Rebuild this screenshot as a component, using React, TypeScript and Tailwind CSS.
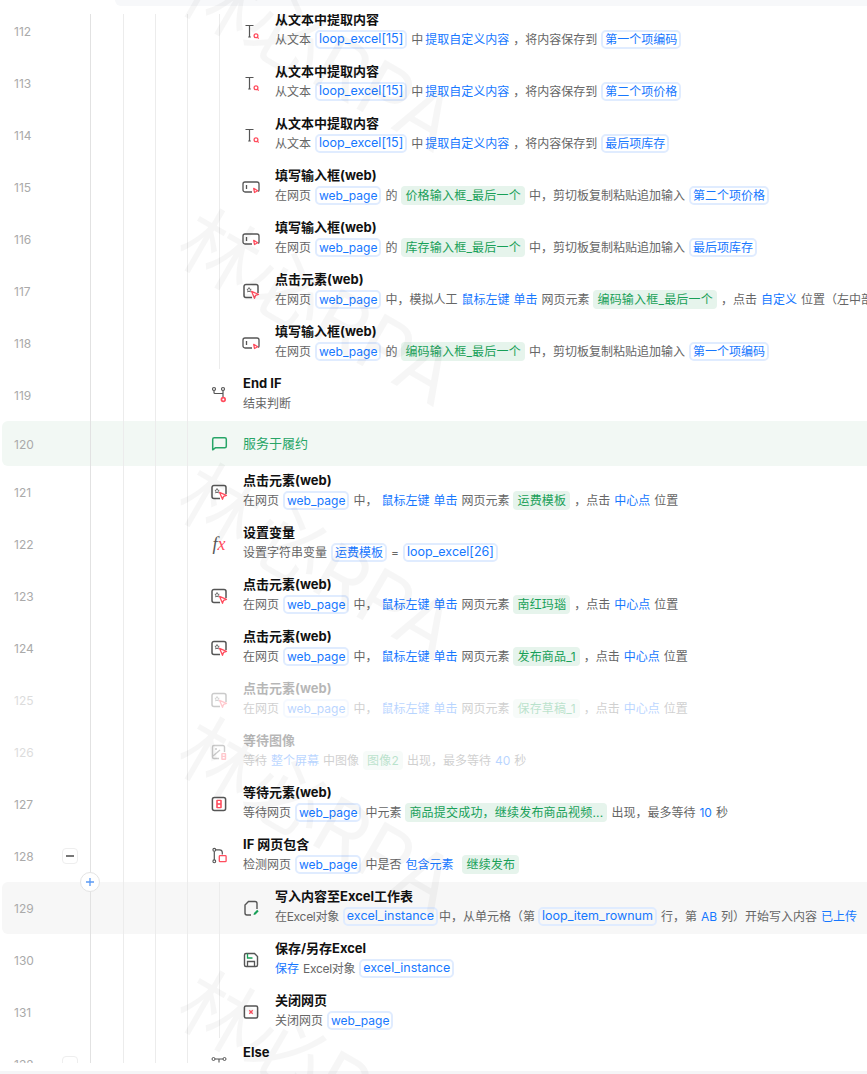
import React from "react";

type Tok = [string, string, string?];

const Pill = ({ children, wide }: { children: React.ReactNode; wide?: boolean }) => (
  <span className={(wide ? "text-[12.5px] " : "") + "inline-flex h-[19px] items-center rounded-[5px] border-2 border-[#e0ecff] px-[2px] text-[#1677ff]"}>{children}</span>
);
const Green = ({ children }: { children: React.ReactNode }) => (
  <span className="inline-flex h-[19px] items-center rounded-[4px] bg-[#e6f4ec] px-[4px] tracking-[0.2px] text-[#18a058]">{children}</span>
);

const Desc = ({ toks }: { toks: Tok[] }) => (
  <div className="mt-[1px] flex h-[19px] items-center gap-1 whitespace-nowrap text-[12px] text-[#666666]">
    {toks.map(([k, t, c], i) => {
      if (k === "p") return <Pill key={i} wide={/^(loop|excel)_/.test(t)}>{t}</Pill>;
      if (k === "g") return <span key={i} className={c}><Green>{t}</Green></span>;
      if (k === "b") return <span key={i} className={"text-[#1677ff] " + (c || "")}>{t}</span>;
      return <span key={i} className={c}>{t}</span>;
    })}
  </div>
);

const D = "#555555";
const R = "#ff4d5e";

const Svg = ({ children }: { children: React.ReactNode }) => (
  <svg width="20" height="20" viewBox="0 0 20 20" fill="none" className="shrink-0">{children}</svg>
);

const IconText = () => (
  <Svg>
    <path d="M4.5 4.5h8M8.5 4.5v11.5M7.2 16h2.6" stroke={D} strokeWidth="1.2" />
    <circle cx="15" cy="14.8" r="1.9" stroke={R} strokeWidth="1.3" />
    <path d="M16.3 16.2l1.4 1.4" stroke={R} strokeWidth="1.2" />
  </Svg>
);
const IconInput = () => (
  <Svg>
    <path d="M11 15H4a2 2 0 0 1-2-2V7a2 2 0 0 1 2-2h12a2 2 0 0 1 2 2v6a2 2 0 0 1-.8 1.6" stroke={D} strokeWidth="1.3" />
    <path d="M5.5 8v4" stroke={D} strokeWidth="1.3" />
    <path d="M12.7 11.3l4 2.4-3.2 1.8z" fill="#ffffff" stroke={R} strokeWidth="1.3" strokeLinejoin="round" />
  </Svg>
);
const IconClick = () => (
  <Svg>
    <path d="M11 16.500H5a2 2 0 0 1-2-2v-9a2 2 0 0 1 2-2h10a2 2 0 0 1 2 2V12" stroke={D} strokeWidth="1.5" />
    <path d="M8 6.500l.6 1.600 1.600.3-1.200 1 .3 1.600-1.300-.8-1.300.8.3-1.600-1.100-1 1.500-.3z" stroke={D} strokeWidth="0.8" />
    <path d="M10.500 10.300l7 3-2.900 1-1.100 3z" fill="#ffffff" stroke={R} strokeWidth="1.300" strokeLinejoin="round" />
  </Svg>
);
const IconEndIf = () => (
  <Svg>
    <circle cx="5" cy="4" r="1.500" stroke={D} strokeWidth="1.200" />
    <circle cx="14" cy="4" r="1.500" stroke={D} strokeWidth="1.200" />
    <path d="M5 5.500V7.500a1 1 0 0 0 1 1h8M14 5.500V12" stroke={D} strokeWidth="1.200" />
    <circle cx="14.300" cy="14.500" r="2.700" fill={R} />
    <circle cx="14.300" cy="14.500" r="1" fill="#ffffff" />
  </Svg>
);
const IconComment = () => (
  <Svg>
    <path d="M3.700 15.800V5.200a1.500 1.500 0 0 1 1.500-1.500h10.600a1.500 1.500 0 0 1 1.500 1.500v7.100a1.500 1.500 0 0 1-1.500 1.500H6.300z" stroke="#27a567" strokeWidth="1.500" strokeLinejoin="round" />
  </Svg>
);
const IconFx = () => (
  <span className="flex w-5 shrink-0 items-center justify-center font-['Liberation_Serif',serif] text-[18px] italic leading-none">
    <span className="text-[#555555]">f</span>
    <span className="text-[#ff4d5e]">x</span>
  </span>
);
const IconImage = () => (
  <Svg>
    <path d="M10 16.500H5a1.500 1.500 0 0 1-1.500-1.500V5A1.500 1.500 0 0 1 5 3.500h9A1.500 1.500 0 0 1 15.500 5v5" stroke={D} strokeWidth="1.400" />
    <circle cx="7" cy="7" r="1" fill={D} />
    <path d="M4 14l7-6" stroke={D} strokeWidth="1.300" />
    <rect x="12.200" y="11" width="5" height="7" rx="1" fill={R} />
    <rect x="13.700" y="12.300" width="2" height="1.500" fill="#ffffff" />
    <rect x="13.700" y="15" width="2" height="1.500" fill="#ffffff" />
  </Svg>
);
const IconWait = () => (
  <Svg>
    <rect x="3.400" y="3.400" width="13.200" height="13.200" rx="2" stroke={D} strokeWidth="1.500" />
    <rect x="7.200" y="5.700" width="5.600" height="8.600" rx="1" fill={R} />
    <rect x="8.800" y="7" width="2.400" height="2.200" fill="#ffffff" />
    <rect x="8.800" y="10.800" width="2.400" height="2.200" fill="#ffffff" />
  </Svg>
);
const IconIf = () => (
  <Svg>
    <circle cx="5.300" cy="3.800" r="1.400" stroke={D} strokeWidth="1.100" />
    <circle cx="5.300" cy="15.300" r="1.400" stroke={D} strokeWidth="1.100" />
    <path d="M5.300 5.200v8.700M6.800 3.800h3.700a2.800 2.800 0 0 1 2.800 2.800v2" stroke={D} strokeWidth="1.200" />
    <rect x="10.300" y="9.700" width="6.800" height="6" rx="0.800" stroke={R} strokeWidth="1.300" />
  </Svg>
);
const IconExcel = () => (
  <Svg>
    <path d="M10 17H6a2 2 0 0 1-2-2V7l3.500-3.500H14a2 2 0 0 1 2 2V11" stroke={D} strokeWidth="1.400" />
    <path d="M12.500 17l.5-2 3.200-3.200 1.500 1.500L14.500 16.500z" fill="#18a058" />
  </Svg>
);
const IconSave = () => (
  <Svg>
    <path d="M3.500 5a1.500 1.500 0 0 1 1.500-1.500h8.500l3 3V15a1.500 1.500 0 0 1-1.500 1.500H5A1.500 1.500 0 0 1 3.500 15z" stroke={D} strokeWidth="1.400" />
    <path d="M6.500 16v-4.500h7V16" stroke={D} strokeWidth="1.300" />
    <path d="M6.500 3.800V8h5" stroke="#18a058" strokeWidth="1.300" />
  </Svg>
);
const IconClose = () => (
  <Svg>
    <rect x="3.400" y="3.900" width="13.200" height="12.200" rx="1.500" stroke={D} strokeWidth="1.500" />
    <path d="M8.300 8.300l3.400 3.400M11.700 8.300l-3.400 3.400" stroke={R} strokeWidth="1.300" />
  </Svg>
);
const IconElse = () => (
  <Svg>
    <circle cx="4.500" cy="5" r="1.500" stroke={D} />
    <circle cx="15.500" cy="5" r="1.500" stroke={D} />
    <path d="M6 5h8M10 5v3.500" stroke={D} strokeWidth="1.100" />
  </Svg>
);

type RowData = {
  n: number;
  depth: 4 | 5;
  icon: React.ReactNode;
  title: string;
  toks: Tok[];
  faded?: boolean;
  hover?: boolean;
  fold?: boolean;
  plus?: boolean;
};

const extract = (n: number, v: string): RowData => ({
  n, depth: 5, icon: <IconText />, title: "从文本中提取内容",
  toks: [["t", "从文本"], ["p", "loop_excel[15]"], ["t", "中"], ["b", "提取自定义内容", "-ml-[2px]"], ["t", "，将内容保存到"], ["p", v]],
});
const fill = (n: number, e: string, v: string): RowData => ({
  n, depth: 5, icon: <IconInput />, title: "填写输入框(web)",
  toks: [["t", "在网页"], ["p", "web_page"], ["t", "的"], ["g", e], ["t", "中，剪切板复制粘贴追加输入"], ["p", v]],
});
const click = (n: number, e: string, faded = false): RowData => ({
  n, depth: 4, icon: <IconClick />, title: "点击元素(web)", faded,
  toks: [["t", "在网页"], ["p", "web_page"], ["t", "中，"], ["b", "鼠标左键"], ["b", "单击"], ["t", "网页元素"], ["g", e], ["t", "，点击"], ["b", "中心点"], ["t", "位置"]],
});

const before: RowData[] = [
  extract(112, "第一个项编码"),
  extract(113, "第二个项价格"),
  extract(114, "最后项库存"),
  fill(115, "价格输入框_最后一个", "第二个项价格"),
  fill(116, "库存输入框_最后一个", "最后项库存"),
  {
    n: 117, depth: 5, icon: <IconClick />, title: "点击元素(web)",
    toks: [["t", "在网页"], ["p", "web_page"], ["t", "中，模拟人工"], ["b", "鼠标左键"], ["b", "单击"], ["t", "网页元素"], ["g", "编码输入框_最后一个"], ["t", "，点击"], ["b", "自定义"], ["t", "位置（左中部"]],
  },
  fill(118, "编码输入框_最后一个", "第一个项编码"),
  { n: 119, depth: 4, icon: <IconEndIf />, title: "End IF", toks: [["t", "结束判断"]] },
];

const after: RowData[] = [
  click(121, "运费模板"),
  {
    n: 122, depth: 4, icon: <IconFx />, title: "设置变量",
    toks: [["t", "设置字符串变量"], ["p", "运费模板"], ["t", "="], ["p", "loop_excel[26]"]],
  },
  click(123, "南红玛瑙"),
  click(124, "发布商品_1"),
  click(125, "保存草稿_1", true),
  {
    n: 126, depth: 4, icon: <IconImage />, title: "等待图像", faded: true,
    toks: [["t", "等待"], ["b", "整个屏幕"], ["t", "中图像"], ["g", "图像2"], ["t", "出现，最多等待"], ["b", "40"], ["t", "秒"]],
  },
  {
    n: 127, depth: 4, icon: <IconWait />, title: "等待元素(web)",
    toks: [["t", "等待网页"], ["p", "web_page"], ["t", "中元素"], ["g", "商品提交成功，继续发布商品视频..."], ["t", "出现，最多等待"], ["b", "10"], ["t", "秒"]],
  },
  {
    n: 128, depth: 4, icon: <IconIf />, title: "IF 网页包含", fold: true, plus: true,
    toks: [["t", "检测网页"], ["p", "web_page"], ["t", "中是否"], ["b", "包含元素"], ["g", "继续发布", "ml-[5px]"]],
  },
  {
    n: 129, depth: 5, icon: <IconExcel />, title: "写入内容至Excel工作表", hover: true,
    toks: [["t", "在Excel对象", "tracking-[-0.3px]"], ["p", "excel_instance"], ["t", "中，从单元格（第", "-ml-[3px] -mr-[1px]"], ["p", "loop_item_rownum"], ["t", "行，第"], ["b", "AB"], ["t", "列）开始写入内容"], ["b", "已上传"]],
  },
  {
    n: 130, depth: 5, icon: <IconSave />, title: "保存/另存Excel",
    toks: [["b", "保存"], ["t", "Excel对象", "tracking-[-0.3px]"], ["p", "excel_instance"]],
  },
  {
    n: 131, depth: 5, icon: <IconClose />, title: "关闭网页",
    toks: [["t", "关闭网页"], ["p", "web_page"]],
  },
  { n: 132, depth: 4, icon: <IconElse />, title: "Else", fold: true, toks: [] },
];

const Guides = ({ depth }: { depth: 4 | 5 }) => (
  <>
    <div className="h-full w-[33px] shrink-0 border-l border-[#e2e2e2]" />
    <div className="h-full w-[32px] shrink-0 border-l border-[#ececec]" />
    <div className="h-full w-[32px] shrink-0 border-l border-[#ececec]" />
    {depth === 5 && <div className="h-full w-[32px] shrink-0 border-l border-[#ececec]" />}
    <div className="h-full w-[22px] shrink-0 border-l border-[#ececec]" />
  </>
);

const Num = ({ n, fold, faded }: { n: number; fold?: boolean; faded?: boolean }) => (
  <div className="flex h-full w-[88px] shrink-0 items-center pl-3">
    <span className={faded ? "mt-[2px] w-[48px] text-[12px] text-[#aaaaaa] opacity-40" : "mt-[2px] w-[48px] text-[12px] text-[#aaaaaa]"}>{n}</span>
    {fold && (
      <span className="flex h-4 w-4 items-center justify-center rounded-[4px] border border-[#eeeeee] bg-white">
        <span className="h-[1.5px] w-2 bg-[#777777]" />
      </span>
    )}
  </div>
);

const Row = ({ r }: { r: RowData }) => (
  <div className={(r.hover ? "bg-[#f7f7f7] " : "") + "relative ml-[2px] flex h-[52px] items-center rounded-l-md"}>
    <Num n={r.n} fold={r.fold} faded={r.faded} />
    <Guides depth={r.depth} />
    <div className={(r.faded ? "opacity-30 " : "") + "flex h-full items-center gap-[14px]"}>
      {r.icon}
      <div className="flex h-full flex-col pt-1">
        <div className="h-[20px] whitespace-nowrap text-[13px] font-bold leading-[20px] text-[#111111]">{r.title}</div>
        <Desc toks={r.toks} />
      </div>
    </div>
    {r.plus && (
      <span className="absolute -bottom-[10px] left-[78px] z-10 flex h-[20px] w-[20px] items-center justify-center rounded-full border border-[#e4e4e4] bg-white">
        <svg width="10" height="10" viewBox="0 0 10 10"><path d="M5 1v8M1 5h8" stroke="#5b9bf5" strokeWidth="1.3" /></svg>
      </span>
    )}
  </div>
);

const Section = () => (
  <div className="relative ml-[2px] flex h-[45px] items-center rounded-l-md bg-[#f2f8f4]">
    <Num n={120} />
    <Guides depth={4} />
    <div className="flex h-full items-center gap-[14px]">
      <IconComment />
      <span className="text-[13px] text-[#27a567]">服务于履约</span>
    </div>
  </div>
);

const marks = [0, 1, 2, 3, 4];

export default function App() {
  return (
    <div className="relative h-[1074px] w-[867px] overflow-hidden bg-white font-['Inter','Noto_Sans_CJK_SC',sans-serif]">
      <div className="ml-[115px] h-[6px] rounded-bl-xl bg-[#f7f8fa]" />
      <div className="h-[8px]" />
      <div className="h-[1049px] overflow-hidden">
        <div className="-mt-[9px]">
          {before.map((r) => <Row key={r.n} r={r} />)}
          <Section />
          {after.map((r) => <Row key={r.n} r={r} />)}
        </div>
      </div>
      <div className="h-[8px]" />
      <div className="h-[3px] bg-[#f5f5f7]" />
      {marks.map((k) => (
        <div
          key={k}
          className="pointer-events-none absolute left-[68px] z-20 flex h-[100px] w-[500px] rotate-[30deg] items-center justify-center whitespace-nowrap text-[78px] text-black/[0.035]"
          style={{ top: 3 + 254 * k }}
        >
          林必RPA
        </div>
      ))}
    </div>
  );
}
